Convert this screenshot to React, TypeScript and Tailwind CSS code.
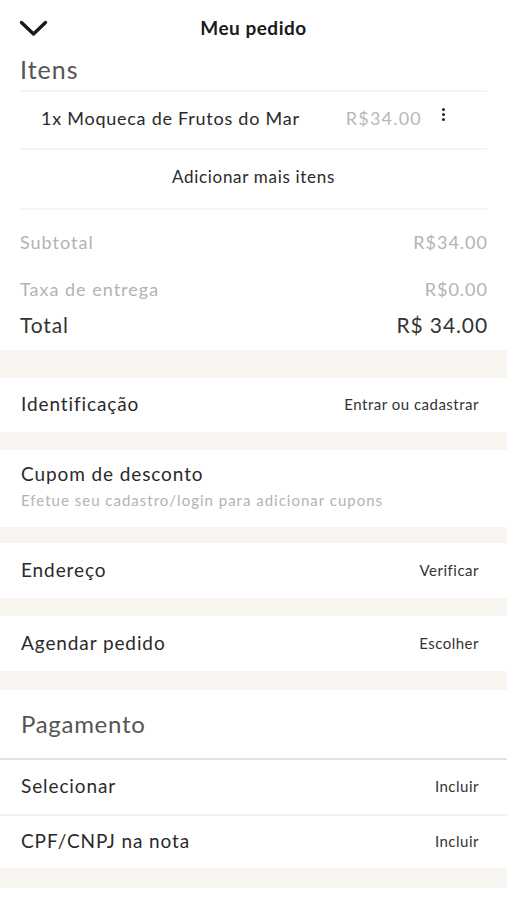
const Band = ({ h }: { h: string }) => <div className={`w-full bg-[#f8f4f0] ${h}`} />;

const Divider = () => <div className="h-[2px] w-full bg-[#f5f5f5]" />;

const ActionRow = ({
  label,
  action,
  height,
}: {
  label: string;
  action: string;
  height: string;
}) => (
  <div className={`flex flex-row items-center justify-between pl-[21px] pr-[28px] pb-[2px] ${height}`}>
    <p className="text-[19px] leading-[24px] tracking-[0.9px] text-[#2a2a2a]">{label}</p>
    <p className="text-[15px] leading-[20px] tracking-[0.5px] text-[#333]">{action}</p>
  </div>
);

const App = () => {
  return (
    <div className="w-[507px] min-h-[900px] bg-white font-['Lato',sans-serif]">
      {/* header */}
      <div className="relative flex h-[56px] items-center justify-center">
        <svg
          className="absolute left-[19px] top-[20px]"
          width="29"
          height="17"
          viewBox="0 0 29 17"
          fill="none"
          stroke="#1a1a1a"
          strokeWidth="3.4"
          strokeLinecap="round"
          strokeLinejoin="round"
        >
          <path d="M2.5 2.5 L14.5 14 L26.5 2.5" />
        </svg>
        <h1 className="text-[19px] leading-[24px] font-bold tracking-[0.5px] text-[#1a1a1a]">Meu pedido</h1>
      </div>

      {/* items */}
      <div className="px-[20px]">
        <div className="flex h-[34px] items-center pb-[8px]">
          <h2 className="text-[25px] leading-[30px] tracking-[1px] text-[#555]">Itens</h2>
        </div>
        <Divider />
        <div className="flex h-[56px] items-center pl-[21px] pr-[42px] pb-[4px]">
          <p className="flex-1 text-[18px] leading-[24px] tracking-[0.75px] text-[#2a2a2a]">
            1x Moqueca de Frutos do Mar
          </p>
          <p className="text-[18px] leading-[24px] tracking-[1.2px] text-[#b8b8b8]">R$34.00</p>
          <span className="ml-[20px] -mt-[7px] flex flex-col gap-[2px]">
            <span className="h-[3px] w-[3px] rounded-full bg-[#222]" />
            <span className="h-[3px] w-[3px] rounded-full bg-[#222]" />
            <span className="h-[3px] w-[3px] rounded-full bg-[#222]" />
          </span>
        </div>
        <Divider />
        <div className="flex h-[58px] items-center justify-center pb-[4px]">
          <p className="text-[17px] leading-[22px] tracking-[0.7px] text-[#2a2a2a]">Adicionar mais itens</p>
        </div>
        <Divider />

        {/* totals */}
        <div className="flex h-[140px] flex-col pt-[18px]">
          <div className="flex h-[28px] items-center justify-between text-[18px] leading-[24px] tracking-[1px] text-[#b3b3b3]">
            <span>Subtotal</span>
            <span className="-mr-[1px]">R$34.00</span>
          </div>
          <div className="mt-[19px] flex h-[28px] items-center justify-between text-[18px] leading-[24px] tracking-[1px] text-[#b3b3b3]">
            <span>Taxa de entrega</span>
            <span className="-mr-[1px]">R$0.00</span>
          </div>
          <div className="mt-[8px] flex h-[28px] items-center justify-between text-[21px] leading-[26px] tracking-[0.9px] text-[#333]">
            <span>Total</span>
            <span className="-mr-[1px]">R$ 34.00</span>
          </div>
        </div>
      </div>

      <Band h="h-[28px]" />
      <ActionRow label="Identificação" action="Entrar ou cadastrar" height="h-[54px]" />
      <Band h="h-[18px]" />

      <div className="flex h-[77px] flex-col pl-[21px] pt-[11px]">
        <p className="text-[19px] leading-[26px] tracking-[0.9px] text-[#2a2a2a]">Cupom de desconto</p>
        <p className="mt-[3px] text-[15px] leading-[20px] tracking-[1px] text-[#b3b3b3]">
          Efetue seu cadastro/login para adicionar cupons
        </p>
      </div>
      <Band h="h-[16px]" />
      <ActionRow label="Endereço" action="Verificar" height="h-[55px]" />
      <Band h="h-[18px]" />
      <ActionRow label="Agendar pedido" action="Escolher" height="h-[55px]" />
      <Band h="h-[19px]" />

      <div className="flex h-[68px] items-center pl-[21px]">
        <h2 className="text-[24px] leading-[30px] tracking-[0.7px] text-[#555]">Pagamento</h2>
      </div>
      <div className="h-[2px] w-full bg-[#e2e2e2]" />
      <ActionRow label="Selecionar" action="Incluir" height="h-[54px]" />
      <div className="h-[2px] w-full bg-[#f3f3f3]" />
      <ActionRow label="CPF/CNPJ na nota" action="Incluir" height="h-[52px]" />
      <Band h="h-[20px]" />
    </div>
  );
};

export default App;
